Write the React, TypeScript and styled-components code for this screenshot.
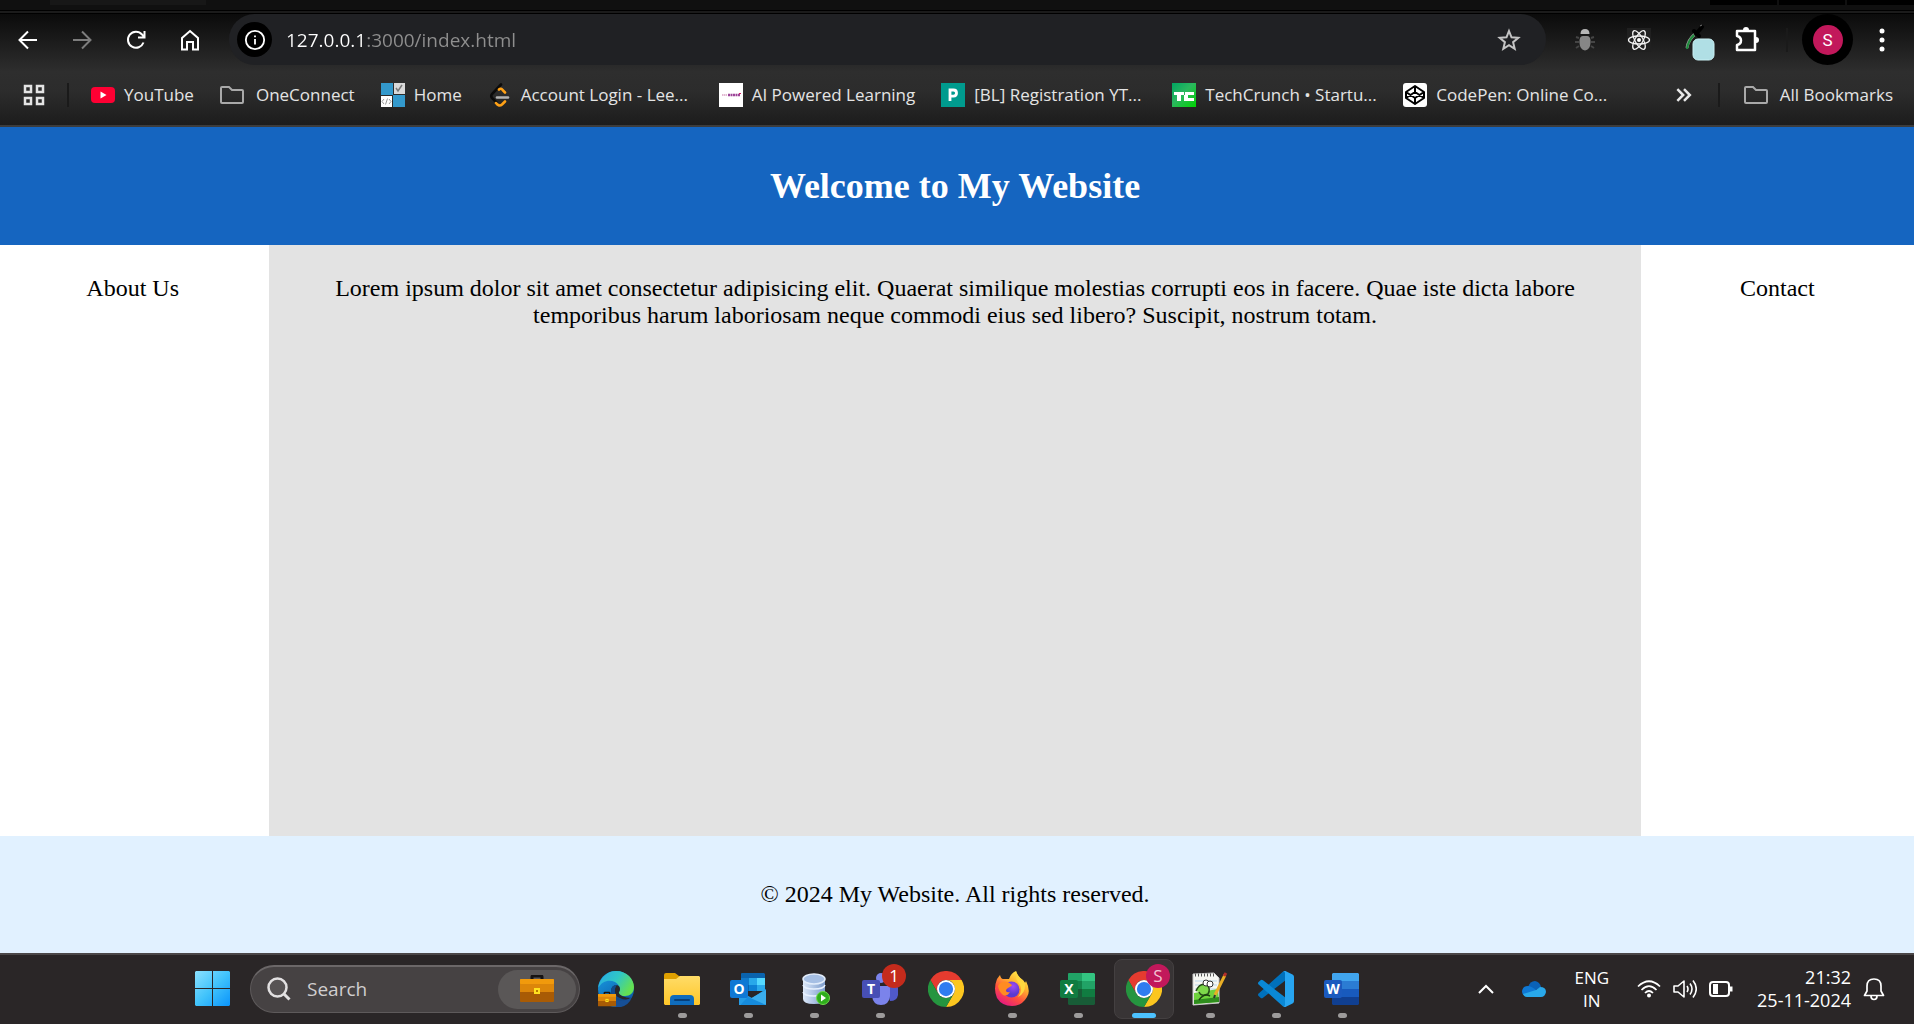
import React from "react";
import styled, { createGlobalStyle } from "styled-components";

const uiFont = `"Open Sans", "Noto Sans", sans-serif`;
const pageFont = `"Liberation Serif", "Times New Roman", serif`;

const GlobalStyle = createGlobalStyle`
  *, *::before, *::after { box-sizing: border-box; }
  body { margin: 0; background: #2a2628; }
  button, input { font: inherit; color: inherit; border: 0; padding: 0; background: none; }
  a { color: inherit; text-decoration: none; }
  svg { display: block; flex: none; }
`;

const Screen = styled.div`
  display: flex;
  flex-direction: column;
  min-height: 100vh;
  overflow: hidden;
`;

/* ---------- browser ---------- */

const BrowserChrome = styled.header`
  font-family: ${uiFont};
  color: #e4e4e4;
  border-bottom: 2px solid #3c3c3c;
`;

const TabStrip = styled.div`
  display: flex;
  justify-content: space-between;
  height: 10px;
  padding-left: 50px;
  background: #101010;
`;

const ActiveTab = styled.div`
  width: 156px;
  height: 5px;
  background: #171717;
`;

const WindowControls = styled.div`
  display: grid;
  grid-template-columns: 1fr 1fr 1fr;
  gap: 2px;
  width: 204px;
  height: 5px;

  span { background: #000; }
`;

const StripEdge = styled.div`
  height: 4px;
  background: #1b1b1b;
  border-top: 1px solid #000;
  border-bottom: 1px solid #000;
`;

const ChromeBody = styled.div`
  background: linear-gradient(#0b0b0b 0, #2e2e2e 58px, #2c2c2c 78px, #1c1c1c 111px);
`;

const Toolbar = styled.div`
  display: flex;
  align-items: center;
  height: 51px;
  padding: 0 5px 0 1px;
`;

const ToolButton = styled.button<{ $muted?: boolean }>`
  display: flex;
  align-items: center;
  justify-content: center;
  width: 54px;
  height: 50px;
  color: ${(p) => (p.$muted ? "#7d7d7d" : "#ffffff")};
`;

const AddressBar = styled.form`
  display: flex;
  align-items: center;
  flex: 1;
  height: 51px;
  margin: 0 12px;
  padding: 0 10px 0 8px;
  border-radius: 26px;
  background: #202124;
`;

const SiteInfo = styled.button`
  display: flex;
  align-items: center;
  justify-content: center;
  width: 35px;
  height: 35px;
  border-radius: 50%;
  background: #000;
  color: #fff;
`;

const AddressInput = styled.input`
  flex: 1;
  min-width: 0;
  height: 32px;
  margin-left: 14px;
  font-size: 19px;
  color: transparent;
  background: linear-gradient(90deg, #ffffff 81px, #8f8f8f 81px);
  background-clip: text;
  outline: none;
`;

const BarDivider = styled.span`
  width: 2px;
  height: 24px;
  background: #1a1a1a;
`;

const ToolbarDivider = styled(BarDivider)`
  margin: 0 14px 0 12px;
`;

const ProfileButton = styled.button`
  display: flex;
  align-items: center;
  justify-content: center;
  width: 51px;
  height: 51px;
  margin-right: 2px;
  border-radius: 50%;
  background: #000;

  span {
    width: 30px;
    height: 30px;
    border-radius: 50%;
    background: #c2185b;
    color: #fff;
    font: 17px/30px Roboto, sans-serif;
  }
`;

const BookmarksBar = styled.nav`
  display: flex;
  align-items: center;
  height: 60px;
  padding: 0 21px 0 23px;
`;

const BookmarkList = styled.ul`
  display: flex;
  flex: 1;
  gap: 26px;
  margin: 0 0 0 22px;
  padding: 0;
  list-style: none;
`;

const Bookmark = styled.a<{ $folder?: boolean; $capped?: boolean }>`
  display: flex;
  align-items: center;
  gap: ${(p) => (p.$folder ? 12 : 9)}px;
  width: ${(p) => (p.$capped ? "205px" : "auto")};
  font-size: 17px;
  line-height: 24px;
  white-space: nowrap;
`;

const IconButton = styled.button`
  display: flex;
  align-items: center;
  justify-content: center;
  height: 24px;
  color: #e8e8e8;
`;

const Overflow = styled(IconButton)`
  width: 20px;
  margin-right: 24px;
`;

const AppsButton = styled(IconButton)`
  width: 22px;
  margin-right: 22px;
`;

const AllBookmarks = styled(Bookmark)`
  margin-left: 24px;
`;

/* ---------- web page ---------- */

const Site = styled.div`
  flex: 1;
  display: grid;
  grid-template-rows: 118px 1fr 117px;
  margin-left: -4px;
  background: #fff;
  color: #000;
  font-family: ${pageFont};
  font-size: 24px;
  line-height: 27px;
  text-align: center;
`;

const SiteHeader = styled.header`
  display: flex;
  align-items: center;
  justify-content: center;
  background: #1565c0;
  color: #fff;

  h1 {
    margin: 0;
    font-size: 36px;
    line-height: 41px;
  }
`;

const Columns = styled.div`
  display: grid;
  grid-template-columns: 1fr 71.5% 1fr;
`;

const Column = styled.section<{ $shaded?: boolean }>`
  padding: 30px;
  background: ${(p) => (p.$shaded ? "#e3e3e3" : "#ffffff")};

  p { margin: 0; }
`;

const SiteFooter = styled.footer`
  display: flex;
  align-items: center;
  justify-content: center;
  background: #e1f1ff;
`;

/* ---------- taskbar ---------- */

const Taskbar = styled.footer`
  display: flex;
  align-items: center;
  height: 71px;
  padding: 0 29px 2px 195px;
  border-top: 2px solid #4b4748;
  background: #2a2627;
  color: #fff;
  font-family: ${uiFont};
`;

const StartButton = styled.button`
  width: 35px;
  height: 35px;
`;

const SearchBox = styled.label`
  display: flex;
  align-items: center;
  width: 330px;
  height: 48px;
  margin: 0 6px 0 20px;
  padding: 0 3px 0 16px;
  border: 1px solid #5e5a5b;
  border-top: 2px solid #6b6768;
  border-radius: 24px;
  background: #464243;

  input {
    flex: 1;
    min-width: 0;
    margin-left: 16px;
    font-size: 19px;
    outline: none;
  }
  input::placeholder { color: #d0cecf; opacity: 1; }
`;

const SearchHighlight = styled.span`
  display: flex;
  align-items: center;
  justify-content: center;
  width: 78px;
  height: 39px;
  border-radius: 20px;
  background: #5a5757;
`;

const AppRow = styled.div`
  display: flex;
  gap: 6px;
`;

const AppButton = styled.button<{ $state: "idle" | "open" | "active" }>`
  position: relative;
  display: flex;
  align-items: center;
  justify-content: center;
  width: 60px;
  height: 60px;
  border: 1px solid ${(p) => (p.$state === "active" ? "#444041" : "transparent")};
  border-radius: 8px;
  background: ${(p) => (p.$state === "active" ? "#383435" : "transparent")};

  &::after {
    content: "";
    display: ${(p) => (p.$state === "idle" ? "none" : "block")};
    position: absolute;
    bottom: 0;
    width: ${(p) => (p.$state === "active" ? 24 : 9)}px;
    height: 5px;
    border-radius: 3px;
    background: ${(p) => (p.$state === "active" ? "#4cc2ff" : "#9d9b9b")};
  }
`;

const Badge = styled.span<{ $color: string; $ink: string }>`
  position: absolute;
  top: 4px;
  right: 3px;
  width: 24px;
  height: 24px;
  border-radius: 50%;
  background: ${(p) => p.$color};
  color: ${(p) => p.$ink};
  font-size: 17px;
  line-height: 24px;
  text-align: center;
`;

const Tray = styled.div`
  display: flex;
  align-items: center;
  margin-left: auto;
`;

const TrayButton = styled.button`
  display: flex;
  align-items: center;
  gap: 12px;
  margin-left: 28px;
`;

const TrayText = styled.button<{ $align: "center" | "right" }>`
  margin-left: ${(p) => (p.$align === "right" ? 24 : 28)}px;
  font-size: ${(p) => (p.$align === "right" ? 18 : 17)}px;
  line-height: 23px;
  text-align: ${(p) => p.$align};

  span { display: block; }
`;

const BellButton = styled.button`
  margin-left: 12px;
`;

/* ---------- line icons ---------- */

const Line = ({ size = 24, width = 2, children }: { size?: number; width?: number; children: React.ReactNode }) => (
  <svg width={size} height={size} viewBox="0 0 24 24" fill="none" stroke="currentColor" strokeWidth={width} aria-hidden="true">
    {children}
  </svg>
);

const FolderIcon = () => (
  <svg width="24" height="20" viewBox="0 0 24 20" fill="none" stroke="#a9a9a9" strokeWidth="2" aria-hidden="true">
    <path d="M1 3Q1 2 2 2H9L12 5H22Q23 5 23 6V17Q23 18 22 18H2Q1 18 1 17Z" />
  </svg>
);

const YouTubeIcon = () => (
  <svg width="24" height="24" viewBox="0 0 24 24" aria-hidden="true">
    <rect y="4" width="24" height="16" rx="4" fill="#ff0033" />
    <path d="M9.5 8.5 15.5 12 9.5 15.5Z" fill="#fff" />
  </svg>
);

const HomeSiteIcon = () => (
  <svg width="24" height="24" viewBox="0 0 24 24" aria-hidden="true">
    <path d="M0 0H12V12H0ZM12 12H24V24H12Z" fill="#3399cc" />
    <path d="M13 0H24V11H13Z" fill="#d9d9d9" />
    <path d="M0 13H11V24H0Z" fill="#fff" />
    <path d="m15 5 2 3 4-6" fill="none" stroke="#777" strokeWidth="1.500" />
    <path d="m3 16-2 2.500 2 2.500M8 16l2 2.500-2 2.500M6.500 15.500l-2 6" fill="none" stroke="#999" />
  </svg>
);

const LeetCodeIcon = () => (
  <svg width="24" height="24" viewBox="0 0 24 24" fill="none" strokeWidth="2.6" strokeLinecap="round" aria-hidden="true">
    <path d="m13 1.500-9 9.500Q2.500 13 4 15l5 5" stroke="#0b0b0b" />
    <path d="m11 6.500q2-2 4 1l2 2M8 20q3 4 6 1.500l3-3" stroke="#ffa116" />
    <path d="M9 14.500H20" stroke="#b3b3b3" />
  </svg>
);

const HelperIcon = () => (
  <svg width="24" height="24" viewBox="0 0 24 24" aria-hidden="true">
    <rect width="24" height="24" fill="#fff" />
    <path d="M3 12H8" stroke="#d9a3c4" strokeWidth="1.500" strokeDasharray="1.500 .5" />
    <path d="M9 12H21" stroke="#9c4498" strokeWidth="2.500" strokeDasharray="2 .5" />
    <path d="M20 10.500H22" stroke="#d81b60" />
  </svg>
);

const PIcon = () => (
  <svg width="24" height="24" viewBox="0 0 24 24" aria-hidden="true">
    <rect width="24" height="24" fill="#009b8e" />
    <path d="M9 18V7H12.500Q15.500 7 15.500 10T12.500 13.200H9" fill="none" stroke="#fff" strokeWidth="2.800" />
  </svg>
);

const TechCrunchIcon = () => (
  <svg width="24" height="24" viewBox="0 0 24 24" aria-hidden="true">
    <defs>
      <linearGradient id="tc" x1="0" y1="0" x2="1" y2="1">
        <stop offset="0" stopColor="#00a562" />
        <stop offset=".45" stopColor="#2bb75f" />
        <stop offset="1" stopColor="#00d301" />
      </linearGradient>
    </defs>
    <rect width="24" height="24" fill="url(#tc)" />
    <path d="M2 9H12V12H9V18H5V12H2ZM13 9H22V12H16V15H22V18H12V12H13Z" fill="#fff" />
  </svg>
);

const CodePenIcon = () => (
  <svg width="24" height="24" viewBox="0 0 24 24" aria-hidden="true">
    <rect width="24" height="24" rx="3" fill="#fff" />
    <path d="M12 3 21 9V15L12 21 3 15V9ZM12 3V9M12 15V21M3 9l9 6 9-6M3 15l9-6 9 6" fill="none" stroke="#000" strokeWidth="2" strokeLinejoin="round" />
  </svg>
);

const BugIcon = () => (
  <svg width="24" height="24" viewBox="0 0 24 24" aria-hidden="true">
    <path d="M6 10 3 9M6 14H2M6 18l-3 2M18 10l3-1M18 14h4M18 18l3 2" stroke="#454545" strokeWidth="2" />
    <path d="M7.500 6Q7.500 1 12 1T16.500 6Z" fill="#b5b5b5" />
    <path d="M6.500 12Q7 8 10 8H14Q17 8 17.500 12V15Q17 22 12 22.500 7 22 6.500 15Z" fill="#868686" />
  </svg>
);

const ReactIcon = () => (
  <svg width="24" height="24" viewBox="0 0 24 24" fill="none" stroke="#f4f4f4" strokeWidth="1.300" aria-hidden="true">
    <rect width="24" height="24" fill="#202020" stroke="none" />
    <ellipse cx="12" cy="12" rx="10.500" ry="4" />
    <ellipse cx="12" cy="12" rx="10.500" ry="4" transform="rotate(60 12 12)" />
    <ellipse cx="12" cy="12" rx="10.500" ry="4" transform="rotate(120 12 12)" />
    <circle cx="12" cy="12" r="2" fill="#fff" stroke="none" />
  </svg>
);

const PickerIcon = () => (
  <svg width="50" height="46" viewBox="-12 0 50 46" aria-hidden="true">
    <path d="M7 31Q8 23 15 17" fill="none" stroke="#8b9b8f" strokeWidth="3" />
    <path d="M7 32Q8 24 14 18" fill="none" stroke="#1d8a3c" strokeWidth="2" />
    <path d="m14 14 5 5M16 17l6-7" stroke="#000" strokeWidth="4" strokeLinecap="round" />
    <path d="m20 9 2-1" stroke="#777" />
    <rect x="13" y="22" width="21" height="21" rx="5" fill="#b0dfe5" stroke="#c9f0f4" />
  </svg>
);

/* ---------- taskbar icons ---------- */

const WindowsLogo = () => (
  <svg width="35" height="35" viewBox="0 0 35 35" aria-hidden="true">
    <defs>
      <linearGradient id="win" gradientUnits="userSpaceOnUse" x1="0" y1="0" x2="35" y2="35">
        <stop offset="0" stopColor="#8be1ff" />
        <stop offset=".5" stopColor="#41c3fb" />
        <stop offset="1" stopColor="#0a94fb" />
      </linearGradient>
    </defs>
    <path d="M1 0H17V17H0V1ZM18 0H34L35 1V17H18ZM0 18H17V35H1L0 34ZM18 18H35V34L34 35H18Z" fill="url(#win)" />
  </svg>
);

const SearchIcon = () => (
  <svg width="24" height="24" viewBox="0 0 24 24" fill="none" stroke="#e2e0e1" strokeWidth="2.500" aria-hidden="true">
    <circle cx="10.500" cy="10.500" r="9" fill="#575354" />
    <path d="m17 17 5.500 5.500" strokeWidth="3" />
  </svg>
);

const Case = () => (
  <g>
    <path d="M12 5V2Q12 1 13 1H21Q22 1 22 2V5" fill="none" stroke="#151313" strokeWidth="3" />
    <rect y="4" width="34" height="23" rx="1" fill="#a85b05" />
    <path d="M1 4H33L34 5V17H0V5Z" fill="#dc860a" />
    <rect y="4" width="34" height="5" rx="1" fill="#f19a0c" />
    <rect x="14" y="13" width="6" height="6" fill="#ffe11f" />
    <rect x="16" y="15" width="2" height="2" fill="#b77a00" />
  </g>
);

const BriefcaseIcon = () => (
  <svg width="34" height="28" viewBox="0 0 34 28" aria-hidden="true"><Case /></svg>
);

const App36 = ({ children }: { children: React.ReactNode }) => (
  <svg width="36" height="36" viewBox="0 0 36 36" aria-hidden="true">{children}</svg>
);

const EdgeIcon = () => (
  <App36>
    <defs>
      <linearGradient id="eg1" x1="0" y1="0" x2="1" y2=".5">
        <stop offset="0" stopColor="#27a8e8" />
        <stop offset=".55" stopColor="#30c7c5" />
        <stop offset="1" stopColor="#64e052" />
      </linearGradient>
      <linearGradient id="eg2" x1="0" y1="0" x2=".6" y2="1">
        <stop offset="0" stopColor="#1aa0e6" />
        <stop offset="1" stopColor="#0b58a5" />
      </linearGradient>
    </defs>
    <circle cx="18" cy="18" r="18" fill="url(#eg2)" />
    <path d="M0 17C2 6 10 0 18 0 29 0 36 8 36 16 36 22 32 25 27 25 22 25 20 23 21 21 23 19 22 14 17 11 11 8 4 10 0 17Z" fill="url(#eg1)" />
    <path d="M13 21Q13 14 19 14 22 15 22 18 22 20 21 21 20 23 24 25 28 27 34 27L36 24V16L37 36H30Q14 33 13 21Z" fill="#2a2627" />
    <path d="M13 19Q12 29 22 33 27 34 33 27 28 30 22 27 16 25 17 18 18 15 19 14 14 14 13 19Z" fill="#114a8b" />
    <path d="M18 29Q27 31 34 26 31 34 23 36H18Z" fill="#164f96" />
    <g transform="translate(0 21) scale(.53)"><Case /></g>
  </App36>
);

const ExplorerIcon = () => (
  <App36>
    <defs>
      <linearGradient id="fold" x1="0" y1="0" x2="0" y2="1">
        <stop offset="0" stopColor="#ffdc68" />
        <stop offset="1" stopColor="#ffc628" />
      </linearGradient>
    </defs>
    <path d="M0 4Q0 2 2 2H11L15 5H34V14H0Z" fill="#dfa000" />
    <path d="M0 8H12L16 5H35L36 6V33L35 34H1L0 33Z" fill="url(#fold)" />
    <path d="M6 34V28Q6 24 10 24H26Q30 24 30 28V34Z" fill="#0f6cbd" />
    <path d="M11 29H25" stroke="#063f7a" strokeWidth="2" strokeLinecap="round" />
  </App36>
);

const Letter = ({ x, children }: { x: number; children: string }) => (
  <text x={x} y="23" textAnchor="middle" fill="#fff" fontFamily="Open Sans, sans-serif" fontWeight="700" fontSize="14">
    {children}
  </text>
);

const OutlookIcon = () => (
  <App36>
    <path d="M11 3Q11 2 12 2H34L35 3V20H11Z" fill="#0a63ad" />
    <path d="M11 7H19V14H11Z" fill="#1179c9" />
    <path d="M19 7H27V14H19Z" fill="#28a8ea" />
    <path d="M27 7H35V14H27Z" fill="#55d9ff" />
    <path d="M19 14H27V20H19Z" fill="#0d80d4" />
    <path d="M27 14H35V20H27Z" fill="#29a9eb" />
    <path d="M9 20 22 27 36 18V34H9Z" fill="#249be5" />
    <path d="M9 34 36 19V33L35 34Z" fill="#3aaeee" />
    <path d="m18 26 18 8H10Z" fill="#168bdc" />
    <rect y="9" width="18" height="18" rx="2" fill="#0f78d4" />
    <Letter x={9}>O</Letter>
  </App36>
);

const DatabaseIcon = () => (
  <App36>
    <defs>
      <linearGradient id="db" x1="0" y1="0" x2="1" y2="0">
        <stop offset="0" stopColor="#dde8f8" />
        <stop offset=".4" stopColor="#b6cae8" />
        <stop offset="1" stopColor="#7c9bcb" />
      </linearGradient>
    </defs>
    <path d="M7 8V28Q7 33 18 33T29 28V8Z" fill="url(#db)" />
    <path d="M7 14Q8 18 18 18T29 14M7 21Q8 25 18 25T29 21" fill="none" stroke="#e8f1ff" strokeWidth="1.500" />
    <ellipse cx="18" cy="8" rx="11" ry="5" fill="#a6bfe4" stroke="#e3edfb" strokeWidth="1.500" />
    <circle cx="27" cy="27" r="6.500" fill="#2fae1c" stroke="#6fda4b" />
    <path d="m25 23.500 5 3.500-5 3.500Z" fill="#fff" />
  </App36>
);

const TeamsIcon = () => (
  <App36>
    <circle cx="30" cy="10" r="4" fill="#5059c9" />
    <path d="M24 15H34Q36 15 36 17V24Q35 30 28 30Z" fill="#5059c9" />
    <circle cx="19" cy="7" r="5" fill="#7b83eb" />
    <path d="M10 15H26Q28 15 28 17V25Q27 34 19 34T10 25Z" fill="#7b83eb" />
    <rect y="9" width="18" height="18" rx="2" fill="#474fb5" />
    <Letter x={9}>T</Letter>
  </App36>
);

const ChromeLogo = () => (
  <svg width="36" height="36" viewBox="0 0 48 48" aria-hidden="true">
    <path d="M3.200 12A24 24 0 0 1 44.800 12H24A12 12 0 0 0 13.600 30Z" fill="#e53b2f" />
    <path d="M44.800 12A24 24 0 0 1 24 48L34.400 30A12 12 0 0 0 24 12Z" fill="#fcc61f" />
    <path d="M24 48A24 24 0 0 1 3.200 12L13.600 30A12 12 0 0 0 34.400 30Z" fill="#25953f" />
    <circle cx="24" cy="24" r="12" fill="#fff" />
    <circle cx="24" cy="24" r="9.500" fill="#2f7cf0" />
  </svg>
);

const FirefoxIcon = () => (
  <App36>
    <defs>
      <linearGradient id="ff1" x1=".8" y1="0" x2=".2" y2="1">
        <stop offset="0" stopColor="#fff44f" />
        <stop offset=".35" stopColor="#ffb02e" />
        <stop offset=".65" stopColor="#ff4f3d" />
        <stop offset="1" stopColor="#e0118c" />
      </linearGradient>
      <radialGradient id="ff2" cx=".6" cy=".3">
        <stop offset="0" stopColor="#a04cf4" />
        <stop offset="1" stopColor="#5b3ad0" />
      </radialGradient>
    </defs>
    <path d="M3 8 6 4Q7 8 9 8L15 8Q17 2 22 0 24 6 29 9 30 10 31 12L32 10Q37 20 33 26 28 35 18 35 8 35 3 27 -1 18 3 8Z" fill="url(#ff1)" />
    <circle cx="17.500" cy="18.500" r="8" fill="url(#ff2)" />
    <path d="M4 15Q7 9 14 11L18 14Q18 15 14 17 12 18 12 20 13 22 16 21 13 26 9 24 5 21 4 15Z" fill="#ff8b22" />
    <path d="M22 0Q21 9 26 14 29 20 24 26 32 22 31 12 29 10 26 7 23 4 22 0Z" fill="#ffd73e" />
  </App36>
);

const ExcelIcon = () => (
  <App36>
    <path d="M8 3Q8 2 9 2H22V10H8Z" fill="#21a366" />
    <path d="M22 2H34L35 3V10H22Z" fill="#33c481" />
    <path d="M8 10H22V18H8Z" fill="#138149" />
    <path d="M22 10H35V18H22Z" fill="#21a366" />
    <path d="M22 18H35V26H22Z" fill="#107c41" />
    <path d="M8 18H22V26H35V33L34 34H9L8 33Z" fill="#185c37" />
    <rect y="9" width="18" height="18" rx="2" fill="#107c41" />
    <Letter x={9}>X</Letter>
  </App36>
);

const NotepadIcon = () => (
  <App36>
    <path d="M1 3 22 2 27 7V32L1 34Z" fill="#f6f6f2" stroke="#c9c9c9" />
    <path d="M3 4H22" stroke="#555" strokeWidth="3" strokeDasharray="1 2" />
    <path d="M3 10H25M3 14H25M3 18H25" stroke="#b9d7ea" />
    <path d="M2 22 26 18 27 31 2 33Z" fill="#6fd23c" />
    <path d="M2 29 27 26V31L2 33Z" fill="#2e8d1d" />
    <path d="M4 20Q8 11 15 14 19 18 16 23 9 26 7 21" fill="#7dd84b" stroke="#254d18" strokeWidth="1.500" />
    <circle cx="14" cy="12" r="3" fill="#fff" stroke="#333" />
    <circle cx="18" cy="13" r="3" fill="#fff" stroke="#333" />
    <path d="M7 29Q12 22 18 25" fill="none" stroke="#1d3f12" strokeWidth="1.500" />
    <path d="M23 24 33 4" stroke="#e9ae26" strokeWidth="3" />
    <path d="m32 5 2-3" stroke="#b4302a" strokeWidth="3" />
    <path d="m22 27 1-3" stroke="#333" strokeWidth="2" />
  </App36>
);

const VSCodeIcon = () => (
  <svg width="36" height="36" viewBox="0 0 100 100" aria-hidden="true">
    <path d="M75 27 14 74Q10 77 7 74L1 69Q-1 66 1 63L69 2 78 0Z" fill="#0070bb" />
    <path d="M75 73 14 26Q10 23 7 26L1 31Q-1 34 1 37L69 98 78 100Z" fill="#0a88d6" />
    <path d="M69 2Q72 -1 76 0L96 10Q100 12 100 16V84Q100 88 96 90L76 100Q72 101 69 98 75 100 75 94V6Q75 0 69 2Z" fill="#27a5f1" />
  </svg>
);

const WordIcon = () => (
  <App36>
    <path d="M8 10V3L9 2H34L35 3V10Z" fill="#41a5ee" />
    <path d="M8 10H35V18H8Z" fill="#2b7cd3" />
    <path d="M8 18H35V26H8Z" fill="#185abd" />
    <path d="M8 26H35V33L34 34H9L8 33Z" fill="#103f91" />
    <rect y="9" width="18" height="18" rx="2" fill="#1b5abe" />
    <Letter x={9}>W</Letter>
  </App36>
);

const OneDriveIcon = () => (
  <svg width="24" height="16" viewBox="0 0 24 16" aria-hidden="true">
    <path d="M6 6Q8 0 13 0 18 1 19 6L12 10Z" fill="#0a62b8" />
    <path d="M5 15Q0 15 0 10 1 5 6 5 9 5 14 9L12 15Z" fill="#0f78d4" />
    <path d="M14 9 18 6Q24 6 24 11 23 16 19 16H5Q2 16 1 13Z" fill="#29a8ea" />
  </svg>
);

/* ---------- data ---------- */

const bookmarks = [
  { title: "YouTube", icon: <YouTubeIcon /> },
  { title: "OneConnect", icon: <FolderIcon />, folder: true },
  { title: "Home", icon: <HomeSiteIcon /> },
  { title: "Account Login - Lee...", icon: <LeetCodeIcon />, capped: true },
  { title: "AI Powered Learning", icon: <HelperIcon /> },
  { title: "[BL] Registration YT...", icon: <PIcon />, capped: true },
  { title: "TechCrunch • Startu...", icon: <TechCrunchIcon />, capped: true },
  { title: "CodePen: Online Co...", icon: <CodePenIcon />, capped: true },
];

type AppEntry = {
  name: string;
  icon: React.ReactNode;
  state: "idle" | "open" | "active";
  badge?: { text: string; color: string; ink: string };
};

const apps: AppEntry[] = [
  { name: "Edge", icon: <EdgeIcon />, state: "idle" },
  { name: "File Explorer", icon: <ExplorerIcon />, state: "open" },
  { name: "Outlook", icon: <OutlookIcon />, state: "open" },
  { name: "Database", icon: <DatabaseIcon />, state: "open" },
  { name: "Teams", icon: <TeamsIcon />, state: "open", badge: { text: "1", color: "#c42b1c", ink: "#ffffff" } },
  { name: "Chrome", icon: <ChromeLogo />, state: "idle" },
  { name: "Firefox", icon: <FirefoxIcon />, state: "open" },
  { name: "Excel", icon: <ExcelIcon />, state: "open" },
  { name: "Chrome, work profile", icon: <ChromeLogo />, state: "active", badge: { text: "S", color: "#c2185b", ink: "#f3c0d3" } },
  { name: "Notepad++", icon: <NotepadIcon />, state: "open" },
  { name: "Visual Studio Code", icon: <VSCodeIcon />, state: "open" },
  { name: "Word", icon: <WordIcon />, state: "open" },
];

/* ---------- sections ---------- */

const Browser = () => (
  <BrowserChrome>
    <TabStrip>
      <ActiveTab />
      <WindowControls><span /><span /><span /></WindowControls>
    </TabStrip>
    <StripEdge />
    <ChromeBody>
      <Toolbar>
        <ToolButton aria-label="Back">
          <Line><path d="M21 12H4M12 3.500 3.500 12l8.500 8.500" /></Line>
        </ToolButton>
        <ToolButton aria-label="Forward" $muted>
          <Line><path d="M3 12H20M12 3.500l8.500 8.500-8.500 8.500" /></Line>
        </ToolButton>
        <ToolButton aria-label="Reload">
          <Line>
            <path d="M19.500 14.500A8 8 0 1 1 18 6.500l2 2.500M20.500 3V9.500H14" />
          </Line>
        </ToolButton>
        <ToolButton aria-label="Home">
          <Line><path d="M4 10 12 3l8 7V21.500H15V14H9v7.500H4Z" /></Line>
        </ToolButton>
        <AddressBar onSubmit={(e) => e.preventDefault()}>
          <SiteInfo type="button" aria-label="Site information">
            <Line size={22}>
              <circle cx="12" cy="12" r="10" />
              <path d="M12 11V17M12 7V9" />
            </Line>
          </SiteInfo>
          <AddressInput aria-label="Address" defaultValue="127.0.0.1:3000/index.html" spellCheck={false} />
          <ToolButton type="button" aria-label="Bookmark this page">
            <svg width="24" height="24" viewBox="0 0 24 24" fill="none" stroke="#c4c4c4" strokeWidth="2" aria-hidden="true">
              <path d="M12 3l2.500 6.300 6.800.5-5.200 4.400 1.600 6.600L12 17.200 6.300 20.800l1.600-6.600L2.700 9.800l6.800-.5Z" />
            </svg>
          </ToolButton>
        </AddressBar>
        <ToolButton aria-label="Debugger"><BugIcon /></ToolButton>
        <ToolButton aria-label="React Developer Tools"><ReactIcon /></ToolButton>
        <ToolButton aria-label="Color picker"><PickerIcon /></ToolButton>
        <ToolButton aria-label="Extensions">
          <svg width="26" height="28" viewBox="0 0 26 28" fill="none" aria-hidden="true">
            <path d="M3 5H21V24H3V19Q7 18 7 14.500T3 10Z" stroke="#fff" strokeWidth="2.500" strokeLinejoin="round" />
            <path d="M9 4Q9 1 12 1T15 4ZM22 11Q25 11 25 14T22 17Z" fill="#fff" />
          </svg>
        </ToolButton>
        <ToolbarDivider />
        <ProfileButton aria-label="Profile"><span>S</span></ProfileButton>
        <ToolButton aria-label="Menu">
          <svg width="6" height="26" viewBox="0 0 6 26" fill="#fff" aria-hidden="true">
            <circle cx="3" cy="4" r="2.500" /><circle cx="3" cy="13" r="2.500" /><circle cx="3" cy="22" r="2.500" />
          </svg>
        </ToolButton>
      </Toolbar>
      <BookmarksBar aria-label="Bookmarks">
        <AppsButton aria-label="Apps">
          <svg width="22" height="22" viewBox="0 0 22 22" fill="none" stroke="#e4e4e4" strokeWidth="2.500" aria-hidden="true">
            <path d="M2 2H8V8H2ZM14 2H20V8H14ZM2 14H8V20H2ZM14 14H20V20H14Z" />
          </svg>
        </AppsButton>
        <BarDivider />
        <BookmarkList>
          {bookmarks.map((b) => (
            <li key={b.title}>
              <Bookmark href="#" $folder={b.folder} $capped={b.capped}>
                {b.icon}
                {b.title}
              </Bookmark>
            </li>
          ))}
        </BookmarkList>
        <Overflow aria-label="More bookmarks">
          <Line size={20} width={3}><path d="m4 5 7 7-7 7M12 5l7 7-7 7" /></Line>
        </Overflow>
        <BarDivider />
        <AllBookmarks href="#" $folder>
          <FolderIcon />
          All Bookmarks
        </AllBookmarks>
      </BookmarksBar>
    </ChromeBody>
  </BrowserChrome>
);

const WebPage = () => (
  <Site>
    <SiteHeader><h1>Welcome to My Website</h1></SiteHeader>
    <Columns>
      <Column><p>About Us</p></Column>
      <Column $shaded>
        <p>
          Lorem ipsum dolor sit amet consectetur adipisicing elit. Quaerat similique molestias corrupti eos in
          facere. Quae iste dicta labore temporibus harum laboriosam neque commodi eius sed libero? Suscipit,
          nostrum totam.
        </p>
      </Column>
      <Column><p>Contact</p></Column>
    </Columns>
    <SiteFooter>© 2024 My Website. All rights reserved.</SiteFooter>
  </Site>
);

const SystemTaskbar = () => (
  <Taskbar>
    <StartButton aria-label="Start"><WindowsLogo /></StartButton>
    <SearchBox>
      <SearchIcon />
      <input type="text" aria-label="Search" placeholder="Search" />
      <SearchHighlight><BriefcaseIcon /></SearchHighlight>
    </SearchBox>
    <AppRow>
      {apps.map((a) => (
        <AppButton key={a.name} aria-label={a.name} $state={a.state}>
          {a.icon}
          {a.badge && <Badge $color={a.badge.color} $ink={a.badge.ink}>{a.badge.text}</Badge>}
        </AppButton>
      ))}
    </AppRow>
    <Tray>
      <TrayButton aria-label="Show hidden icons">
        <svg width="16" height="10" viewBox="0 0 16 10" fill="none" stroke="#fff" strokeWidth="2" aria-hidden="true">
          <path d="m1 9 7-7 7 7" />
        </svg>
      </TrayButton>
      <TrayButton aria-label="OneDrive"><OneDriveIcon /></TrayButton>
      <TrayText $align="center"><span>ENG</span><span>IN</span></TrayText>
      <TrayButton aria-label="Network, volume and battery">
        <svg width="24" height="18" viewBox="0 0 24 18" fill="none" stroke="#fff" strokeWidth="1.700" aria-hidden="true">
          <path d="M1 6.500Q12-4 23 6.500M4.500 10Q12 2.500 19.500 10M8 13Q12 9 16 13" />
          <circle cx="12" cy="15.500" r="2" fill="#fff" stroke="none" />
        </svg>
        <svg width="24" height="20" viewBox="0 0 24 20" fill="none" stroke="#fff" strokeWidth="1.600" aria-hidden="true">
          <path d="M1 7H5L11 2V18L5 13H1ZM14 7Q16 10 14 13M17 4.500Q21 10 17 15.500M20 1.500Q26.500 10 20 18.500" strokeLinejoin="round" />
        </svg>
        <svg width="24" height="16" viewBox="0 0 24 16" fill="none" stroke="#fff" strokeWidth="2" aria-hidden="true">
          <rect x="1" y="1" width="19" height="14" rx="3" />
          <path d="M4 3H9V13H4Z" fill="#fff" stroke="none" />
          <path d="M22 5.500V10.500" strokeWidth="3" />
        </svg>
      </TrayButton>
      <TrayText $align="right"><span>21:32</span><span>25-11-2024</span></TrayText>
      <BellButton aria-label="Notifications">
        <svg width="22" height="24" viewBox="0 0 22 24" fill="none" stroke="#fff" strokeWidth="1.700" strokeLinejoin="round" aria-hidden="true">
          <path d="M1.500 18.500 4 14V9Q4 2 11 2T18 9V14L20.500 18.500ZM8 19Q8 22.500 11 22.500T14 19" />
        </svg>
      </BellButton>
    </Tray>
  </Taskbar>
);

export default function App() {
  return (
    <Screen>
      <GlobalStyle />
      <Browser />
      <WebPage />
      <SystemTaskbar />
    </Screen>
  );
}
